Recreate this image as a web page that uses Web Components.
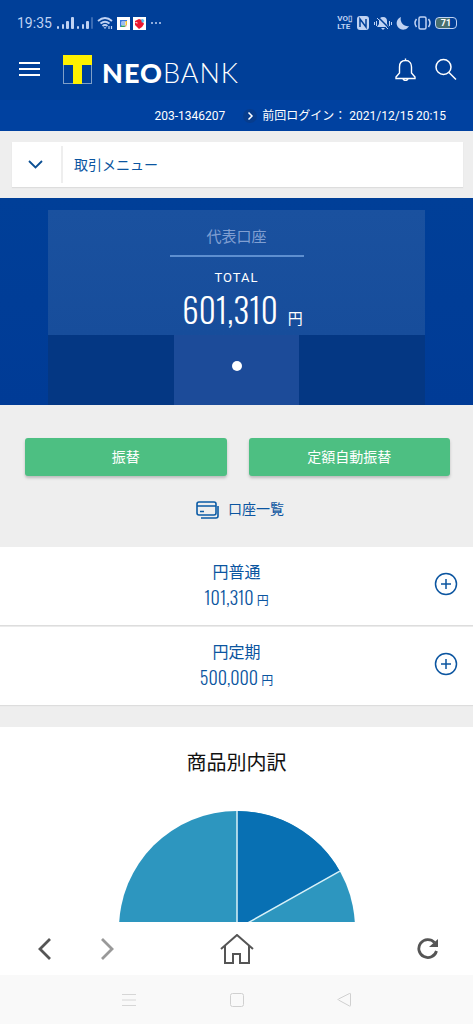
<!DOCTYPE html>
<html lang="ja">
<head>
<meta charset="utf-8">
<meta name="viewport" content="width=device-width, initial-scale=1">
<title>NEOBANK</title>
<style>
  html, body { margin: 0; height: 100%; }
  body {
    --blue: #003f98;
    --ink: #0b55a0;
    --grey: #eeeeee;
    --number: "Oswald", "Open Sans Condensed", "Roboto Condensed", "Liberation Sans Narrow", Roboto, sans-serif;
    font-family: Roboto, "Noto Sans CJK JP", sans-serif;
    background: #fff;
  }
</style>
</head>
<body>
<neo-app></neo-app>
<script>
const define = (name, css, html) => {
  const template = document.createElement('template');
  template.innerHTML = `<style>*{box-sizing:border-box}svg{display:block;flex:none}a{color:inherit;text-decoration:none}button{font:inherit;color:inherit;border:0;padding:0;background:none;cursor:pointer}${css}</style>${html}`;
  customElements.define(name, class extends HTMLElement {
    constructor() {
      super();
      this.attachShadow({ mode: 'open' }).append(template.content.cloneNode(true));
    }
  });
};

define('status-bar', `
  :host { display: flex; height: 46px; padding: 0 16px 0 17px; align-items: center; justify-content: space-between; background: var(--blue); color: #bfd2f3; }
  .side { display: flex; align-items: center; gap: 4px; }
  .start { gap: 3px; }
  .time { font-size: 14px; line-height: 20px; margin-right: 2px; }
  .volte { font-size: 8px; line-height: 8px; font-weight: 700; }
  .volte span { display: block; }
  .battery { width: 22px; height: 12px; border: 1px solid #bfd2f3; border-radius: 4px; font-size: 9px; line-height: 10px; font-weight: 700; text-align: center; color: #fff; background: linear-gradient(90deg, #49706f 70%, transparent 70%); }
`, `
  <div class="side start">
    <span class="time">19:35</span>
    <svg width="17" height="14" fill="currentColor"><rect x="0" y="10" width="2" height="3" rx="1"/><rect x="5" y="8" width="2" height="5" rx="1"/><rect x="9" y="5" width="3" height="8" rx="1"/><rect x="14" y="1" width="3" height="12" rx="1"/></svg>
    <svg width="17" height="14" fill="currentColor"><rect x="0" y="10" width="2" height="3" rx="1"/><rect x="5" y="8" width="2" height="5" rx="1"/><rect x="9" y="5" width="3" height="8" rx="1"/><rect x="14" y="1" width="2" height="12" rx="1" opacity=".3"/></svg>
    <svg width="17" height="14" fill="none" stroke="currentColor" stroke-width="1.8"><path d="M1 5Q8 -1 15 5M3.500 7.500Q8 4 12.500 7.500M5.500 10Q8 8 10.500 10"/><path d="M6.500 11.200h3L8 13z" fill="currentColor" stroke="none"/><path d="M12 10v3M14.500 10v3" stroke-width="1.200"/></svg>
    <svg width="13" height="13"><rect width="13" height="13" fill="#fff"/><path d="M3 3h7v1.500H4.500V10H3z" fill="#3976dd"/><path d="M10 4v4H8.500V4z" fill="#f4c332"/><path d="M4 8.500h5L7.500 10H4z" fill="#35a263"/><path d="M5 5h3v3H5z" fill="#9bbcf2"/><path d="M8.500 8.500H10L8.500 10z" fill="#e34c3d"/></svg>
    <svg width="13" height="13"><rect width="13" height="13" fill="#fff"/><path d="M2 4l4-2 3 1 2 4-2 3-3 2-3-3-1-1z" fill="#ec1730"/><path d="M8 2.500l2-.5 1.500 2L9 6z" fill="#55c2ef"/><path d="M2.500 5.500l2 .5" stroke="#fff" fill="none"/></svg>
    <svg width="13" height="4" fill="currentColor"><circle cx="3" cy="2" r="1"/><circle cx="7" cy="2" r="1"/><circle cx="11" cy="2" r="1"/></svg>
  </div>
  <div class="side">
    <span class="volte"><span>VO▯</span><span>LTE</span></span>
    <svg width="14" height="14"><rect x="1" width="12" height="14" rx="3" fill="#bfd2f3"/><path d="M4 11V3l6 8V3" fill="none" stroke="#003f98" stroke-width="1.500"/></svg>
    <svg width="18" height="14" fill="currentColor"><path d="M9 1c3 0 4 2 4 4v3l2 3H3l2-3V5c0-2 1-4 4-4zM7 12h4l-2 2zM0 6h1v3H0zM2 5h1v5H2zM15 5h1v5h-1zM17 6h1v3h-1z"/><path d="M4 1l11 11" stroke="#003f98" stroke-width="1.500"/><path d="M3 2l11 11" stroke="#bfd2f3"/></svg>
    <svg width="14" height="14" fill="currentColor"><path d="M5 1a7 7 0 0 0 8 9A6.500 6.500 0 1 1 5 1z"/></svg>
    <svg width="17" height="14" fill="none" stroke="currentColor" stroke-width="1.500"><rect x="5" y="1" width="7" height="12" rx="1.500"/><path d="M2.500 3Q-.5 7 2.500 11M14.500 3Q17.500 7 14.500 11"/></svg>
    <span class="battery">71</span>
  </div>
`);

define('brand-header', `
  :host { display: flex; height: 54px; padding: 0 16px 8px 19px; align-items: center; background: var(--blue); color: #fff; }
  .logo { display: flex; align-items: center; gap: 10px; margin: 0 auto 0 23px; }
  .word { font-family: Lato, sans-serif; font-size: 27px; line-height: 28px; font-weight: 300; padding-top: 8px; letter-spacing: 1px; }
  b { font-weight: 900; }
  .tools { display: flex; gap: 19px; }
`, `
  <button aria-label="メニュー"><svg width="21" height="14" stroke="#fff" stroke-width="2"><path d="M0 1h21M0 7h21M0 13h21"/></svg></button>
  <a class="logo" href="#"><svg width="29" height="29"><rect x=".5" y=".5" width="28" height="28" fill="none" stroke="#7fa0c8"/><path d="M0 0h29v10H19v19h-9V10H0z" fill="#fff100"/></svg><span class="word"><b>NEO</b>BANK</span></a>
  <div class="tools">
    <button aria-label="お知らせ"><svg width="21" height="23" fill="none" stroke="#fff" stroke-width="1.400"><path d="M10.500 2.500C6 2.500 4.500 6 4.500 9v6L1 19v1.500h19V19l-3.500-4V9c0-3-1.500-6.500-6-6.500zM10.500 2.500V.5M8 21q2.500 3 5 0"/></svg></button>
    <button aria-label="検索"><svg width="22" height="23" fill="none" stroke="#fff" stroke-width="1.500"><circle cx="8.500" cy="9" r="7.500"/><path d="M14 14.500l7 7"/></svg></button>
  </div>
`);

define('login-strip', `
  :host { display: flex; height: 31px; padding: 0 27px; align-items: center; justify-content: flex-end; background: #0041a0; color: #fff; font-size: 12px; line-height: 16px; }
  a { display: flex; align-items: center; gap: 5px; margin-left: 18px; }
`, `
  <span>203-1346207</span>
  <a href="#"><svg width="14" height="14"><circle cx="7" cy="7" r="7" fill="#063c8d"/><path d="M5.500 3.500L9 7l-3.500 3.500" stroke="#fff" stroke-width="1.500" fill="none"/></svg><span>前回ログイン： 2021/12/15 20:15</span></a>
`);

define('trade-menu', `
  :host { display: block; padding: 11px 10px 11px 12px; background: var(--grey); }
  button { display: flex; width: 100%; height: 45px; align-items: center; background: #fff; box-shadow: 0 1px 1px #ddd; color: var(--ink); font-size: 14px; line-height: 20px; text-align: left; }
  .toggle { display: flex; width: 51px; height: 37px; align-items: center; padding-left: 16px; border-right: 2px solid #eee; margin-right: 11px; }
`, `
  <button aria-expanded="false"><span class="toggle"><svg width="15" height="9" fill="none" stroke="#0b4f93" stroke-width="1.800"><path d="M1 1l6.500 6.500L14 1"/></svg></span><span>取引メニュー</span></button>
`);

define('balance-hero', `
  :host { display: block; padding: 12px 10% 0; background: linear-gradient(#003f98, #003b96); color: #fff; text-align: center; }
  .card { height: 125px; margin: 0 1px; padding-top: 16px; background: linear-gradient(#1a519f, #174d9b); display: flex; flex-direction: column; align-items: center; }
  h2 { margin: 0; width: 134px; height: 31px; border-bottom: 2px solid #5e8fd0; color: #809fd2; font-size: 15px; line-height: 22px; font-weight: 400; }
  .label { margin-top: 12px; font-size: 13px; line-height: 18px; letter-spacing: 1px; }
  .amount { display: flex; align-items: baseline; gap: 10px; padding-left: 12px; font-family: var(--number); font-weight: 300; font-size: 33px; line-height: 46px; white-space: nowrap; }
  small { font-family: "Noto Sans CJK JP", sans-serif; font-size: 15px; font-weight: 400; line-height: 20px; }
  .base { display: grid; grid-template-columns: repeat(3, 1fr); height: 70px; margin: 0 1px; background: #043783; }
  .stem { grid-column: 2; background: #1c4b99; display: flex; justify-content: center; padding-top: 26px; }
  .dot { width: 10px; height: 10px; border-radius: 50%; background: #fff; }
`, `
  <div class="card"><h2>代表口座</h2><div class="label">TOTAL</div><div class="amount"><span>601,310</span><small>円</small></div></div>
  <div class="base"><div class="stem"><button class="dot" aria-label="1"></button></div></div>
`);

define('quick-actions', `
  :host { display: block; padding: 33px 23px 0 25px; height: 142px; background: var(--grey); }
  .buttons { display: grid; grid-template-columns: 1fr 1fr; gap: 22px; }
  .buttons button { height: 38px; border-radius: 3px; background: #4dbf82; color: #fff; font-size: 14px; line-height: 20px; box-shadow: 0 2px 3px #bbb; }
  a { display: flex; justify-content: center; align-items: center; gap: 9px; margin-top: 23px; padding-left: 4px; color: var(--ink); font-size: 14px; line-height: 20px; }
`, `
  <div class="buttons"><button>振替</button><button>定額自動振替</button></div>
  <a href="#"><svg width="24" height="19" fill="none" stroke="#0b5ba5" stroke-width="1.600"><rect x="2" y="2" width="19" height="13" rx="2"/><path d="M2 6h19M5 11.500h4M23 6v10q0 2-2 2H6"/></svg><span>口座一覧</span></a>
`);

define('account-row', `
  :host { display: grid; grid-template-columns: 1fr auto 1fr; align-items: center; height: 78px; padding: 0 15px 4px; background: #fff; color: var(--ink); box-shadow: 0 1px 1px #ddd; text-align: center; }
  .info { grid-column: 2; padding-top: 2px; }
  .name { font-size: 16px; line-height: 24px; }
  .amount { font-family: var(--number); font-weight: 300; font-size: 18px; line-height: 24px; }
  small { font-family: "Noto Sans CJK JP", sans-serif; font-weight: 400; font-size: 12px; line-height: 16px; margin-left: 3px; }
  button { justify-self: end; }
`, `
  <div class="info"><div class="name"><slot name="name"></slot></div><div class="amount"><slot></slot><small>円</small></div></div>
  <button aria-label="詳細を開く"><svg width="24" height="24" fill="none" stroke="#0b55a0" stroke-width="1.500"><circle cx="12" cy="12" r="10.500"/><path d="M7 12h10M12 7v10"/></svg></button>
`);

define('product-chart', `
  :host { display: flex; flex-direction: column; align-items: center; padding-top: 21px; background: #fff; color: #111; }
  h2 { margin: 0 0 33px; font-size: 20px; line-height: 30px; font-weight: 400; }
`, `
  <h2>商品別内訳</h2>
  <svg width="236" height="236" role="img" aria-label="円普通 101,310円、円定期 500,000円"><circle cx="118" cy="118" r="118" fill="#2d96bf"/><path d="M118 118V0A118 118 0 0 1 220.850 60.160z" fill="#0870b3"/><path d="M118 0V118L220.850 60.160" fill="none" stroke="#d8f1f8" stroke-width="1.500"/></svg>
`);

define('browser-bar', `
  :host { display: flex; height: 53px; padding: 0 34px; align-items: center; justify-content: space-between; background: #fff; }
  .side { display: flex; flex: 1; gap: 48px; padding-left: 4px; }
  .end { justify-content: flex-end; }
`, `
  <div class="side">
    <button aria-label="戻る"><svg width="14" height="22" fill="none" stroke="#555" stroke-width="2.800"><path d="M12 1L2 11l10 10"/></svg></button>
    <button aria-label="進む"><svg width="14" height="22" fill="none" stroke="#999" stroke-width="2.800"><path d="M2 1l10 10L2 21"/></svg></button>
  </div>
  <button aria-label="ホーム"><svg width="34" height="30" fill="none" stroke="#555" stroke-width="2"><path d="M1 15L17 1l16 14M5 12v17h8v-9h7v9h9V12"/></svg></button>
  <div class="side end"><button aria-label="再読み込み"><svg width="22" height="22" fill="none" stroke="#555" stroke-width="2.800"><path d="M17.500 4.500A9 9 0 1 0 19.500 13"/><path d="M21 1v8h-9z" fill="#555" stroke="none"/></svg></button></div>
`);

define('system-nav', `
  :host { display: grid; grid-template-columns: repeat(3, 108px); justify-content: center; justify-items: center; align-items: center; height: 49px; background: #f9f9f9; }
`, `
  <button aria-label="アプリ履歴"><svg width="14" height="14" stroke="#d6d6d6"><path d="M0 1.500h14M0 7h14M0 12.500h14"/></svg></button>
  <button aria-label="ホーム画面"><svg width="14" height="14" fill="none" stroke="#d0d0d0"><rect x=".5" y=".5" width="13" height="13" rx="2"/></svg></button>
  <button aria-label="前の画面"><svg width="15" height="15" fill="none" stroke="#d0d0d0"><path d="M12.500 1.500L1.500 7q-1 .5 0 1l11 6q1 .5 1-.5V2q0-1-1-.5z"/></svg></button>
`);

define('neo-app', `
  :host { display: flex; flex-direction: column; height: 100vh; overflow: hidden; }
  main { flex: 1; min-height: 0; overflow: hidden; }
  .accounts { display: grid; gap: 2px; padding-bottom: 22px; background: var(--grey); }
  status-bar, brand-header, login-strip, browser-bar, system-nav { flex: none; }
`, `
  <status-bar></status-bar>
  <brand-header></brand-header>
  <login-strip></login-strip>
  <main>
    <trade-menu></trade-menu>
    <balance-hero></balance-hero>
    <quick-actions></quick-actions>
    <div class="accounts">
      <account-row><span slot="name">円普通</span>101,310</account-row>
      <account-row><span slot="name">円定期</span>500,000</account-row>
    </div>
    <product-chart></product-chart>
  </main>
  <browser-bar></browser-bar>
  <system-nav></system-nav>
`);
</script>
</body>
</html>
